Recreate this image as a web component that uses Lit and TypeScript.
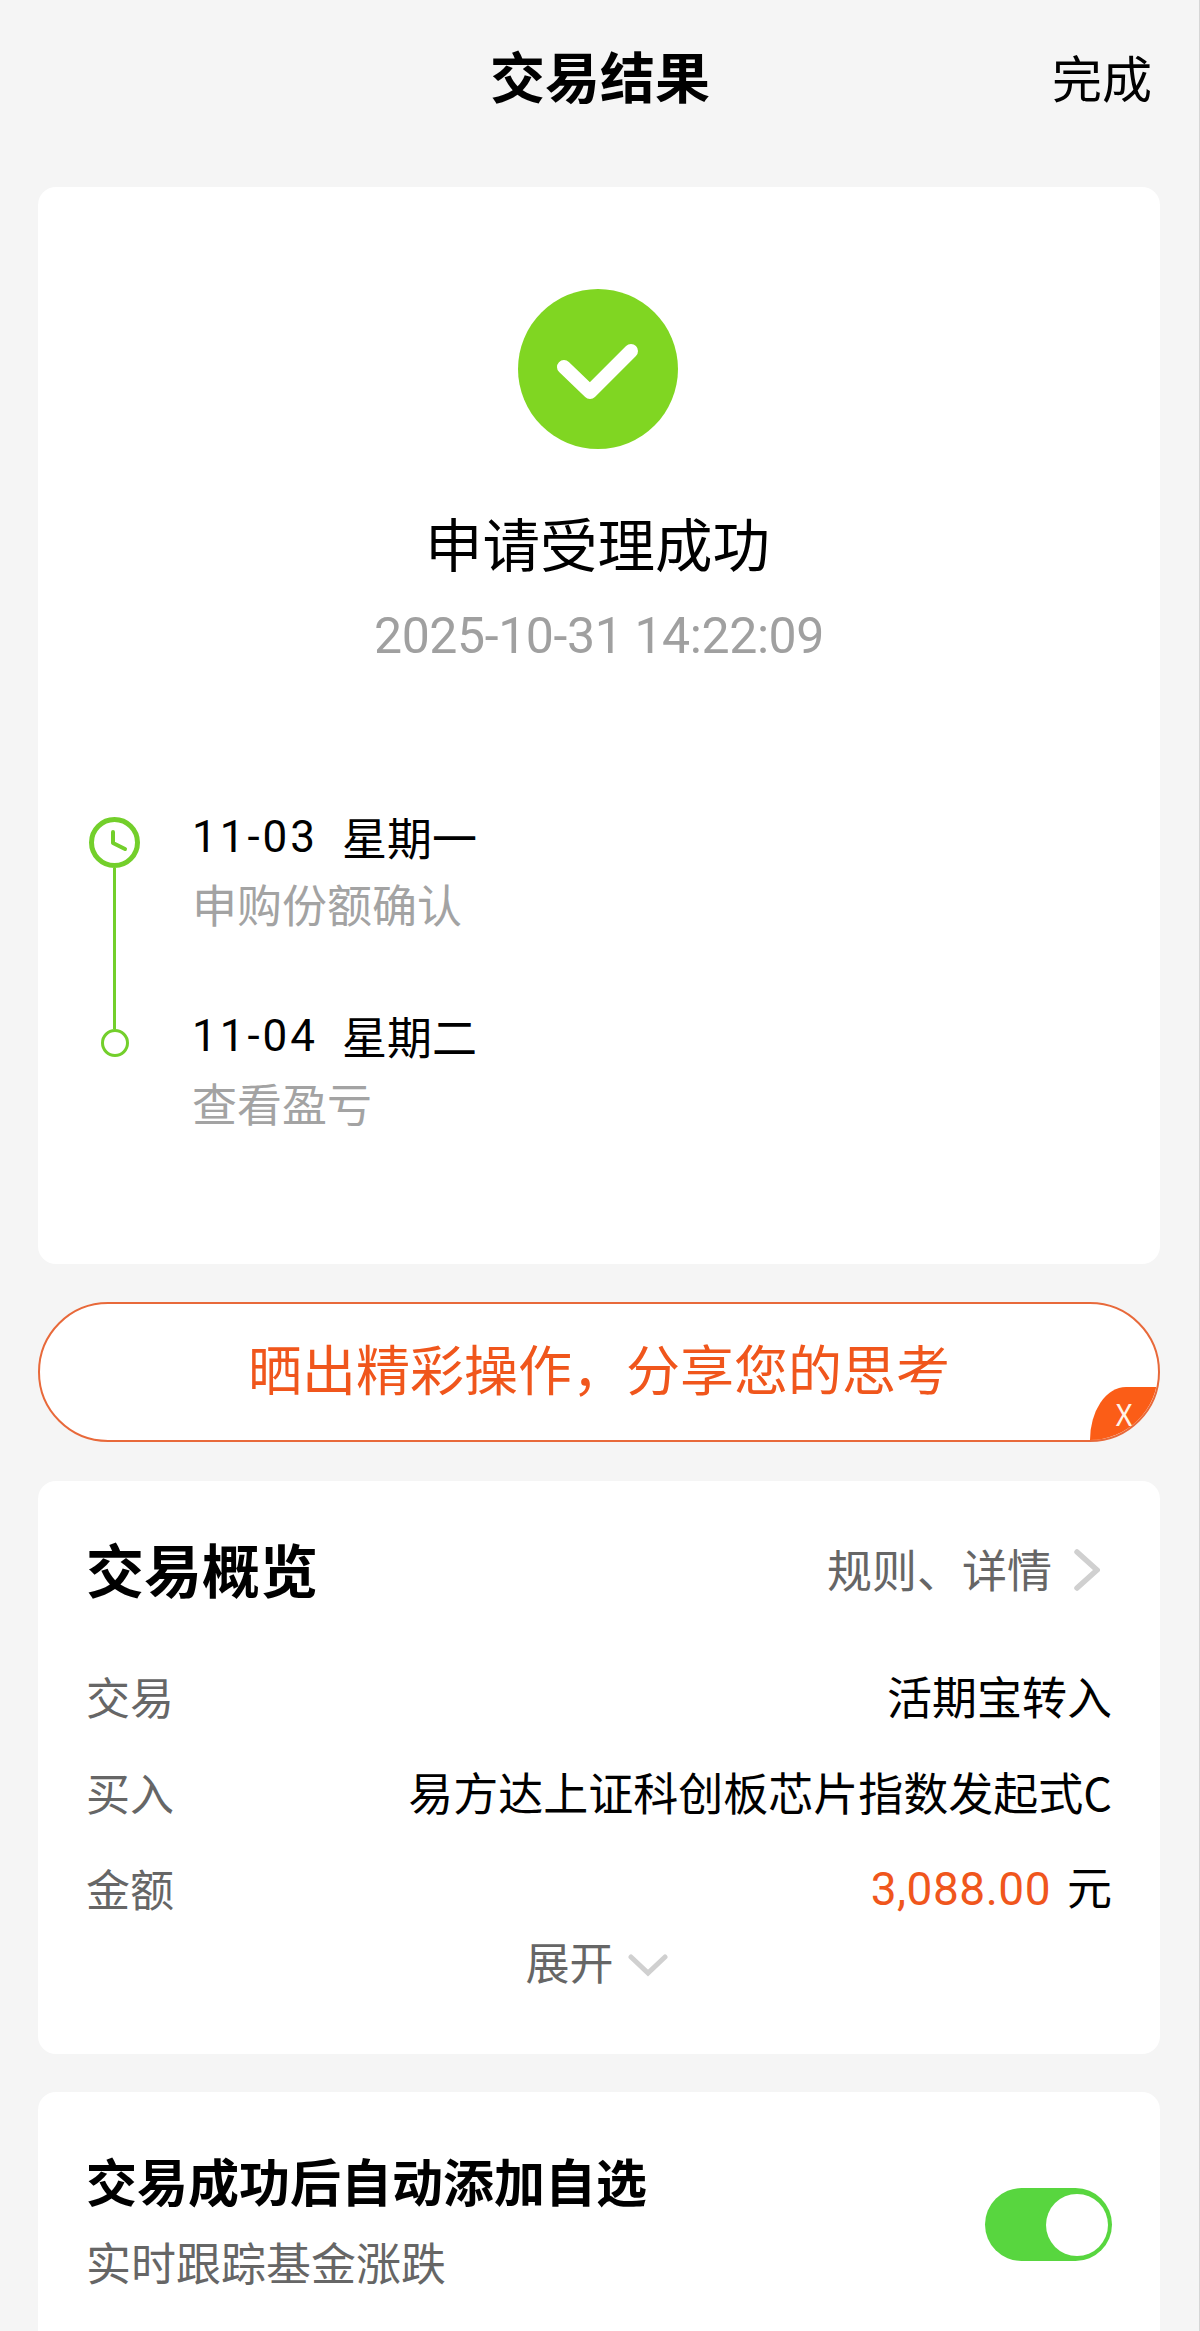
import { LitElement, html, css } from "lit";
import { customElement } from "lit/decorators.js";

@customElement("app-root")
export class AppRoot extends LitElement {
  static styles = css`
    :host {
      display: block;
      width: 1200px;
      height: 2331px;
      overflow: hidden;
      background: #f5f5f5;
      box-shadow: inset -1px 0 0 #d6d6d6;
      color: #000;
      font-family: Roboto, "Noto Sans CJK SC", sans-serif;
    }
    .cjk { font-family: "Noto Sans CJK SC", sans-serif; }
    .header {
      height: 187px;
      box-sizing: border-box;
      padding: 0 48px;
      display: grid;
      grid-template-columns: 1fr auto 1fr;
      align-items: start;
    }
    .header h1 {
      grid-column: 2;
      margin: 40px 0 0;
      font-size: 55px;
      line-height: 68px;
      font-weight: 700;
    }
    .done {
      grid-column: 3;
      justify-self: end;
      margin-top: 44px;
      font-size: 50px;
      line-height: 64px;
    }
    .card {
      margin: 0 40px 0 38px;
      background: #fff;
      border-radius: 18px;
    }
    .result {
      height: 1077px;
      box-sizing: border-box;
      padding-top: 102px;
    }
    .check { display: block; margin-left: 480px; width: 160px; height: 160px; }
    .result h2 {
      margin: 53px 0 0;
      padding-right: 3px;
      text-align: center;
      font-size: 57.5px;
      line-height: 80px;
      font-weight: 400;
    }
    .date {
      margin-top: 24px;
      text-align: center;
      font-size: 50px;
      letter-spacing: -0.4px;
      line-height: 60px;
      color: #a0a0a0;
    }
    .timeline {
      margin-top: 141px;
      padding-left: 51px;
      display: flex;
      gap: 52px;
    }
    .rail {
      width: 51px;
      padding-top: 10px;
      display: flex;
      flex-direction: column;
      align-items: center;
    }
    .clock { display: block; width: 51px; height: 51px; }
    .line { width: 3px; height: 161px; background: #73cf2b; }
    .dot {
      width: 28px;
      height: 28px;
      box-sizing: border-box;
      border: 3px solid #73cf2b;
      border-radius: 50%;
    }
    .steps { display: flex; flex-direction: column; gap: 72px; }
    .step-date {
      font-size: 45px;
      line-height: 60px;
      display: flex;
      gap: 24px;
    }
    .step-num { font-size: 44px; letter-spacing: 3px; }
    .step-note {
      margin-top: 7px;
      font-size: 45px;
      line-height: 60px;
      color: #a3a3a3;
    }
    .banner {
      position: relative;
      margin: 38px 40px 0 38px;
      height: 140px;
      box-sizing: border-box;
      border: 2px solid #e8693a;
      border-radius: 70px;
      background: #fff;
      overflow: hidden;
      display: flex;
      align-items: center;
      justify-content: center;
      padding-bottom: 10px;
      font-size: 54px;
      color: #f0561c;
    }
    .badge {
      position: absolute;
      right: 0;
      bottom: 0;
      width: 68px;
      height: 53px;
      background: #fb5d17;
      border-top-left-radius: 36px 53px;
      color: #fff3e8;
      font-size: 30px;
      line-height: 53px;
      text-align: center;
    }
    .summary {
      margin-top: 39px;
      height: 573px;
      box-sizing: border-box;
      padding: 47px 48px 0 48px;
    }
    .summary-head {
      display: flex;
      justify-content: space-between;
      align-items: center;
      height: 80px;
    }
    .summary-head h3 {
      margin: 0;
      font-size: 58px;
      line-height: 80px;
      font-weight: 700;
    }
    .rules {
      display: flex;
      align-items: center;
      gap: 20px;
      margin-right: 12px;
      font-size: 45px;
      color: #666;
    }
    .chev { display: block; }
    .rules .chev { margin-top: 3px; }
    .rows { margin-top: 58px; display: flex; flex-direction: column; gap: 36px; }
    .row {
      display: flex;
      justify-content: space-between;
      align-items: center;
      height: 60px;
      font-size: 45px;
      line-height: 60px;
    }
    .label { color: #666; font-size: 44px; }
    .amount { color: #f0561c; margin-right: 16px; font-size: 46px; letter-spacing: 0.5px; }
    .expand {
      margin-top: 13px;
      padding-right: 5px;
      display: flex;
      justify-content: center;
      align-items: center;
      gap: 14px;
      height: 60px;
      font-size: 44px;
      color: #666;
    }
    .expand .chev { margin-top: 7px; }
    .auto {
      margin-top: 38px;
      height: 300px;
      box-sizing: border-box;
      padding: 51px 48px 0 48px;
      display: flex;
      justify-content: space-between;
      align-items: flex-start;
    }
    .auto-title {
      font-size: 51px;
      line-height: 74px;
      font-weight: 700;
    }
    .auto-sub {
      margin-top: 15px;
      font-size: 45px;
      line-height: 60px;
      color: #666;
    }
    .toggle {
      margin-top: 45px;
      width: 127px;
      height: 73px;
      box-sizing: border-box;
      padding: 6px 4px 5px 0;
      border-radius: 37px;
      background: #58d63f;
      display: flex;
      justify-content: flex-end;
    }
    .knob { width: 62px; height: 62px; border-radius: 50%; background: #fff; }
  `;

  render() {
    return html`
      <div class="header">
        <h1 class="cjk">交易结果</h1>
        <div class="done cjk">完成</div>
      </div>

      <section class="card result">
        <svg class="check" viewBox="0 0 160 160">
          <circle cx="80" cy="80" r="80" fill="#80d622"></circle>
          <path d="M46 78 L72 103 L113 62" fill="none" stroke="#fff" stroke-width="14" stroke-linecap="round" stroke-linejoin="round"></path>
        </svg>
        <h2 class="cjk">申请受理成功</h2>
        <div class="date">2025-10-31 14:22:09</div>
        <div class="timeline">
          <div class="rail">
            <svg class="clock" viewBox="0 0 51 51">
              <circle cx="25.5" cy="25.5" r="23" fill="none" stroke="#73cf2b" stroke-width="5"></circle>
              <path d="M24 15 V26 L36 32" fill="none" stroke="#73cf2b" stroke-width="4" stroke-linecap="round" stroke-linejoin="round"></path>
            </svg>
            <div class="line"></div>
            <div class="dot"></div>
          </div>
          <div class="steps">
            <div>
              <div class="step-date"><span class="step-num">11-03</span><span class="cjk">星期一</span></div>
              <div class="step-note cjk">申购份额确认</div>
            </div>
            <div>
              <div class="step-date"><span class="step-num">11-04</span><span class="cjk">星期二</span></div>
              <div class="step-note cjk">查看盈亏</div>
            </div>
          </div>
        </div>
      </section>

      <div class="banner cjk">
        晒出精彩操作，分享您的思考
        <div class="badge">X</div>
      </div>

      <section class="card summary">
        <div class="summary-head">
          <h3 class="cjk">交易概览</h3>
          <div class="rules cjk">
            <span>规则、详情</span>
            <svg class="chev" width="28" height="42" viewBox="0 0 28 42">
              <path d="M5 3 L25 21 L5 39" fill="none" stroke="#d0d0d0" stroke-width="5.5" stroke-linecap="round"></path>
            </svg>
          </div>
        </div>
        <div class="rows">
          <div class="row"><span class="label cjk">交易</span><span class="cjk">活期宝转入</span></div>
          <div class="row"><span class="label cjk">买入</span><span class="cjk">易方达上证科创板芯片指数发起式C</span></div>
          <div class="row"><span class="label cjk">金额</span><span><span class="amount">3,088.00</span><span class="cjk">元</span></span></div>
        </div>
        <div class="expand cjk">
          <span>展开</span>
          <svg class="chev" width="40" height="24" viewBox="0 0 40 24">
            <path d="M3 4 L20 20 L37 4" fill="none" stroke="#d0d0d0" stroke-width="5" stroke-linecap="round"></path>
          </svg>
        </div>
      </section>

      <section class="card auto">
        <div>
          <div class="auto-title cjk">交易成功后自动添加自选</div>
          <div class="auto-sub cjk">实时跟踪基金涨跌</div>
        </div>
        <div class="toggle"><div class="knob"></div></div>
      </section>
    `;
  }
}
